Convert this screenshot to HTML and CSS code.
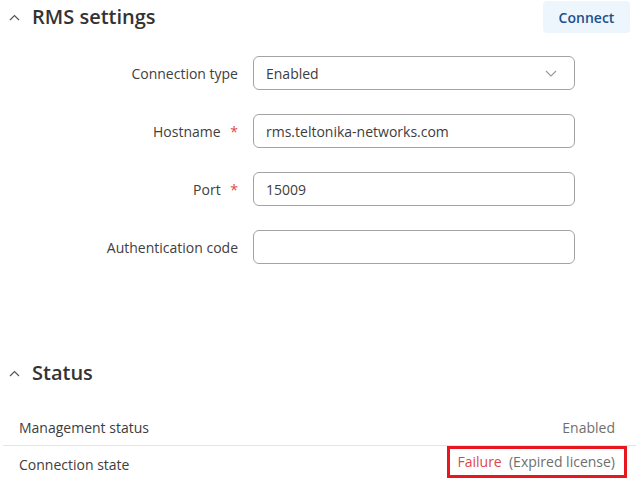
FILE: index.html
```html
<!DOCTYPE html>
<html>
<head>
	<meta charset="utf-8">
	<meta name="viewport" content="width=device-width, initial-scale=1">
	<link rel="stylesheet" href="styles.css">
</head>
<body>
<div class="page">
   <div class="section-head">
      <div class="title">
         <svg class="chevron" width="11" height="7" viewBox="0 0 11 7"><path d="M1 6 L5.5 1.5 L10 6" fill="none" stroke="#555" stroke-width="1.2"/></svg>
         <h2>RMS settings</h2>
      </div>
      <button class="connect-btn">Connect</button>
   </div>
   <div class="form">
      <div class="form-row">
         <label for="conn-type">Connection type</label>
         <div class="select">
            <span id="conn-type">Enabled</span>
            <svg width="12" height="7" viewBox="0 0 12 7"><path d="M1 1 L6 6 L11 1" fill="none" stroke="#9a9a9a" stroke-width="1.1"/></svg>
         </div>
      </div>
      <div class="form-row">
         <label for="hostname">Hostname <span class="req">*</span></label>
         <input type="text" id="hostname" value="rms.teltonika-networks.com">
      </div>
      <div class="form-row">
         <label for="port">Port <span class="req">*</span></label>
         <input type="text" id="port" value="15009">
      </div>
      <div class="form-row">
         <label for="auth">Authentication code</label>
         <input type="text" id="auth">
      </div>
   </div>
   <div class="section-head status-head">
      <div class="title">
         <svg class="chevron" width="11" height="7" viewBox="0 0 11 7"><path d="M1 6 L5.5 1.5 L10 6" fill="none" stroke="#555" stroke-width="1.2"/></svg>
         <h2>Status</h2>
      </div>
   </div>
   <div class="status-list">
      <div class="status-row">
         <span>Management status</span>
         <span class="value">Enabled</span>
      </div>
      <div class="status-row">
         <span>Connection state</span>
         <span class="value highlight"><span class="fail">Failure</span>&nbsp; (Expired license)</span>
      </div>
   </div>
</div>
</body>
</html>
```

FILE: styles.css
```css
body {
   margin: 0;
   background: #fff;
   font-family: "Open Sans", "Noto Sans", sans-serif;
   font-size: 14px;
   color: #3d3d3d;
   overflow: hidden;
}

.page {
   width: 636px;
}

.section-head {
   display: flex;
   justify-content: space-between;
   align-items: center;
   height: 34px;
}

.title {
   display: flex;
   align-items: center;
}

.chevron {
   margin: 0 12px 0 9px;
}

.title h2 {
   margin: 0;
   font-size: 20px;
   font-weight: 600;
   color: #333;
   line-height: 34px;
}

.connect-btn {
   background: #eef6fd;
   border: none;
   border-radius: 4px;
   color: #1c4f8c;
   font-family: inherit;
   font-size: 14px;
   font-weight: 600;
   height: 32px;
   width: 87px;
   margin: 0 6px 0 0;
   padding: 0;
}

.form {
   display: flex;
   flex-direction: column;
   gap: 24px;
   padding-top: 22px;
}

.form-row {
   display: flex;
   align-items: center;
}

.form-row label {
   width: 238px;
   text-align: right;
   margin-right: 15px;
   color: #404040;
}

.req {
   color: #e0474c;
   margin-left: 6px;
}

.form-row input,
.select {
   box-sizing: border-box;
   width: 322px;
   height: 34px;
   border: 1px solid #a3a3a3;
   border-radius: 6px;
   padding: 0 12px;
   font-family: inherit;
   font-size: 14px;
   color: #3d3d3d;
   outline: none;
}

.select {
   display: flex;
   align-items: center;
   justify-content: space-between;
   padding-right: 17px;
}

.status-head {
   margin-top: 92px;
}

.status-list {
   margin: 19px 0 0 3px;
}

.status-row {
   display: flex;
   justify-content: space-between;
   align-items: center;
   height: 36px;
   padding: 0 21px 0 16px;
}

.status-row + .status-row {
   border-top: 1px solid #e1e4ee;
}

.value {
   color: #6f6f6f;
}

.highlight {
   position: relative;
   top: -2px;
   border: 3px solid #e8161e;
   padding: 3px 9px 4px 7px;
   margin-right: -12px;
}

.fail {
   color: #e0474c;
}
```
